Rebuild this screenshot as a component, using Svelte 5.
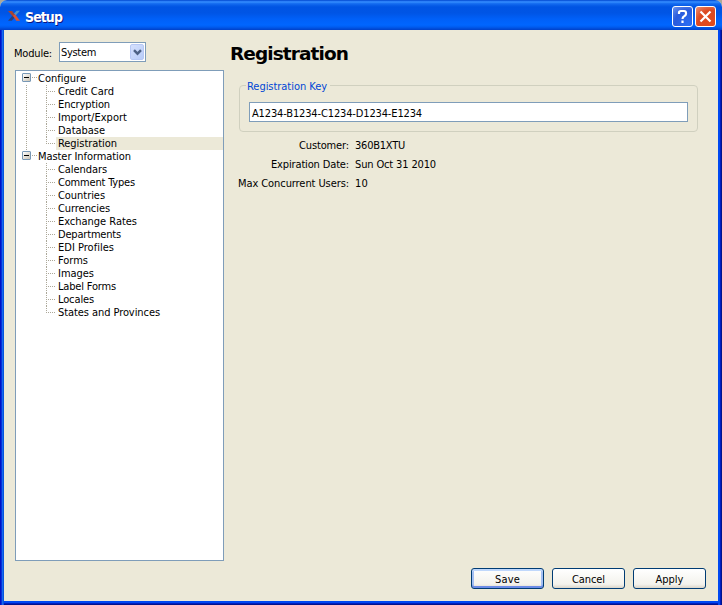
<script>
  const groups = [
    {
      label: 'Configure', width: 48,
      items: [['Credit Card', 56], ['Encryption', 52], ['Import/Export', 69], ['Database', 47], ['Registration', 59]]
    },
    {
      label: 'Master Information', width: 93,
      items: [
        ['Calendars', 49], ['Comment Types', 77], ['Countries', 47], ['Currencies', 52],
        ['Exchange Rates', 79], ['Departments', 63], ['EDI Profiles', 56], ['Forms', 30],
        ['Images', 36], ['Label Forms', 58], ['Locales', 36], ['States and Provinces', 102]
      ]
    }
  ];
  const details = [
    ['Customer:', 50, '360B1XTU', 50],
    ['Expiration Date:', 78, 'Sun Oct 31 2010', 81],
    ['Max Concurrent Users:', 111, '10', 13]
  ];
  const buttons = [['Save', 25], ['Cancel', 33], ['Apply', 28]];
  let selected = $state('Registration');
  let key = $state('A1234-B1234-C1234-D1234-E1234');

  // Spreads the letters so that the label takes the given width.
  function fit(node, width) {
    const natural = node.getBoundingClientRect().width;
    node.style.letterSpacing = `${(width - natural) / node.textContent.length}px`;
  }
</script>

<div class="window">
  <header>
    <svg class="logo" width="14" height="12" viewBox="0 0 14 12">
      <path d="M13 .8H9.6L7 3.6 8.4 5.8Z" fill="#4a93cc" />
      <path d="M1 10.8H4.8L7.4 7.8 5.6 5.6Z" fill="#27407f" />
      <path d="M1 1H5L8.2 5.2 6.6 7.2Z" fill="#a8452f" />
      <path d="M6 5.6 8.2 4.6 13 10.8H9.2Z" fill="#dc5230" />
    </svg>
    <span class="title" use:fit={37}>Setup</span>
    <button class="cap help" aria-label="Help">
      <svg width="19" height="19" viewBox="0 0 19 19"><path d="M6 7V5.5Q6 4 8 4H11Q13 4 13 6V7Q13 8 11.5 9Q9.5 10 9.5 12M9.5 13.6V16" /></svg>
    </button>
    <button class="cap close" aria-label="Close">
      <svg width="19" height="19" viewBox="0 0 19 19"><path d="M4.5 4.5 14.5 14.5M14.5 4.5 4.5 14.5" /></svg>
    </button>
  </header>

  <main>
    <section class="side">
      <div class="module">
        <span class="modlabel"><span class="t" use:fit={38}>Module:</span></span>
        <div class="combo">
          <span class="t" use:fit={35}>System</span>
          <span class="arrow"><svg width="9" height="7" viewBox="0 0 9 7"><path d="M1 1.2 4.5 4.7 8 1.2" /></svg></span>
        </div>
      </div>
      <div class="tree">
        {#each groups as g, i}
          <div class="row group">
            <span class="box"></span><span class="dash"></span>
            <span class="t" use:fit={g.width}>{g.label}</span>
          </div>
          <div class="items" class:trunk={i === 0}>
            {#each g.items as [name, w]}
              <div class="row item">
                <span class="branch"></span>
                <!-- svelte-ignore a11y_click_events_have_key_events, a11y_no_static_element_interactions -->
                <span class="name" class:on={selected === name} onclick={() => (selected = name)}><span class="t" use:fit={w}>{name}</span></span>
              </div>
            {/each}
          </div>
        {/each}
      </div>
    </section>

    <section class="content">
      <h1><span class="t" use:fit={118}>Registration</span></h1>
      <fieldset>
        <legend><span class="t" use:fit={80}>Registration Key</span></legend>
        <div class="field"><span class="t" use:fit={170}>{key}</span></div>
      </fieldset>
      <dl>
        {#each details as [k, kw, v, vw]}
          <dt><span class="t" use:fit={kw}>{k}</span></dt>
          <dd><span class="t" use:fit={vw}>{v}</span></dd>
        {/each}
      </dl>
      <footer>
        {#each buttons as [b, w], i}
          <button class="push" class:primary={i === 0}><span class="t" use:fit={w}>{b}</span></button>
        {/each}
      </footer>
    </section>
  </main>
</div>

<style>
  :global(body) { margin: 0; background: #aca899; }
  * { box-sizing: border-box; }
  .window {
    width: 722px; height: 605px; display: flex; flex-direction: column; overflow: hidden;
    font: 11px/13px 'DejaVu Sans Condensed', 'DejaVu Sans', sans-serif; font-stretch: condensed; color: #000;
    background: #ece9d8; border-radius: 7px 7px 0 0;
  }
  .t { display: inline-block; white-space: pre; }
  header {
    height: 30px; flex: none; display: flex; align-items: center; padding: 2px 6px 0 7px;
    background: linear-gradient(#0046c8 0, #1c6cf0 1px, #3a93ff 2px, #1c74f4 3px, #0a60ea 5px, #0054e3 7px, #0055e5 13px, #0060f8 19px, #0066ff 25px, #005cf0 27px, #0040c8 30px);
  }
  .logo { margin: -1px 4px 0 0; flex: none; }
  .title {
    font: bold 14px/16px 'DejaVu Sans Condensed', 'DejaVu Sans', sans-serif; font-stretch: condensed;
    color: #fff; text-shadow: 1px 1px #0a1883; margin: 1px auto 0 0; white-space: nowrap;
  }
  .cap {
    width: 21px; height: 21px; padding: 0; margin-left: 2px; border: 1px solid #fff; border-radius: 3px;
    display: flex; align-items: center; justify-content: center;
  }
  .cap svg { fill: none; stroke: #fff; stroke-width: 2.2; flex: none; }
  .help { background: radial-gradient(circle at 80% 90%, #2a6cf3, #2a5bdc 60%, #6c94ee 100%); }
  .close { background: radial-gradient(circle at 80% 90%, #e24b1c, #dc4a22 60%, #ee9175 100%); }
  main {
    flex: 1; display: flex; min-height: 0; border: 0 solid transparent; border-width: 0 4px 4px;
    padding-left: 11px;
    background:
      linear-gradient(90deg, #0013c5 0 1px, #0831d9 1px 2px, #166aee 2px 3px, #0855dd 3px 4px) left / 4px 100% no-repeat border-box,
      linear-gradient(90deg, #0048f1 0 2px, #001dc0 2px 3px, #00138c 3px 4px) right / 4px 100% no-repeat border-box,
      linear-gradient(#0048f1 0 2px, #001dc0 2px 3px, #00138c 3px 4px) bottom / 100% 4px no-repeat border-box,
      #ece9d8;
  }
  .side { width: 209px; flex: none; }
  .module { display: flex; align-items: center; height: 20px; margin-top: 12px; }
  .modlabel { width: 45px; margin-left: -1px; padding-top: 2px; }
  .combo {
    width: 87px; height: 20px; border: 1px solid #7f9db9; background: #fff; padding: 1px;
    display: flex; align-items: center; justify-content: space-between;
  }
  .arrow {
    width: 14px; height: 16px; border-radius: 2px; border: 1px solid #b7c8f5;
    background: linear-gradient(135deg, #d5e0fd, #b8ccf8); display: flex; align-items: center; justify-content: center;
  }
  .arrow svg { fill: none; stroke: #4d6185; stroke-width: 2.4; }
  .tree { height: 491px; margin-top: 8px; border: 1px solid #7f9db9; background: #fff; padding-top: 1px; }
  .row { display: flex; height: 13px; }
  .group { padding-left: 6px; }
  .box {
    width: 9px; height: 9px; margin-top: 1px; border: 1px solid #7898b5; border-radius: 1px;
    background: linear-gradient(#000, #000) center / 5px 1px no-repeat, linear-gradient(135deg, #fff, #c9c2b2);
  }
  .dash { width: 7px; height: 1px; margin-top: 5px; background: repeating-linear-gradient(90deg, transparent 0 1px, #aca899 1px 2px); }
  .items { padding-left: 30px; }
  .trunk { background: repeating-linear-gradient(#aca899 0 1px, transparent 1px 2px) 10px 0 / 1px 100% no-repeat; }
  .branch {
    width: 10px; height: 13px; flex: none;
    background:
      repeating-linear-gradient(#aca899 0 1px, transparent 1px 2px) 0 0 / 1px 13px no-repeat,
      repeating-linear-gradient(90deg, #aca899 0 1px, transparent 1px 2px) 0 6px / 9px 1px no-repeat;
  }
  .item:last-child .branch { background-size: 1px 6px, 9px 1px; }
  .name { flex: 1; padding-left: 2px; }
  .on { background: #ece9d8; }
  .content { flex: 1; display: flex; flex-direction: column; padding: 0 12px 12px 6px; min-width: 0; }
  h1 { font: bold 18.5px/24px 'DejaVu Sans', sans-serif; margin: 12px 0 0; }
  fieldset {
    height: 53px; margin: 13px 8px 0 9px; padding: 9px 9px 0; border: 1px solid #d0d0bf; border-radius: 4px; min-width: 0;
  }
  legend { height: 13px; padding: 1px 3px 0 1px; margin-left: -3px; color: #0046d5; }
  .field { height: 20px; border: 1px solid #7f9db9; background: #fff; padding: 4px 2px 0; margin-top: 1px; }
  dl { margin: 7px 0 0; display: grid; grid-template-columns: 119px auto; column-gap: 6px; row-gap: 6px; }
  dt { text-align: right; }
  dd { margin: 0; }
  footer { margin-top: auto; display: flex; justify-content: flex-end; gap: 8px; }
  .push {
    width: 73px; height: 21px; padding: 1px 0 0; font: inherit; color: #000; border: 1px solid #003c74; border-radius: 3px;
    background: linear-gradient(#fff, #f3f2ec 80%, #dbd5c9);
  }
  .primary { box-shadow: inset 0 2px #c0d8fc, inset 0 -2px #6b8be6, inset 2px 0 #a3bff3, inset -2px 0 #a3bff3; }
</style>
